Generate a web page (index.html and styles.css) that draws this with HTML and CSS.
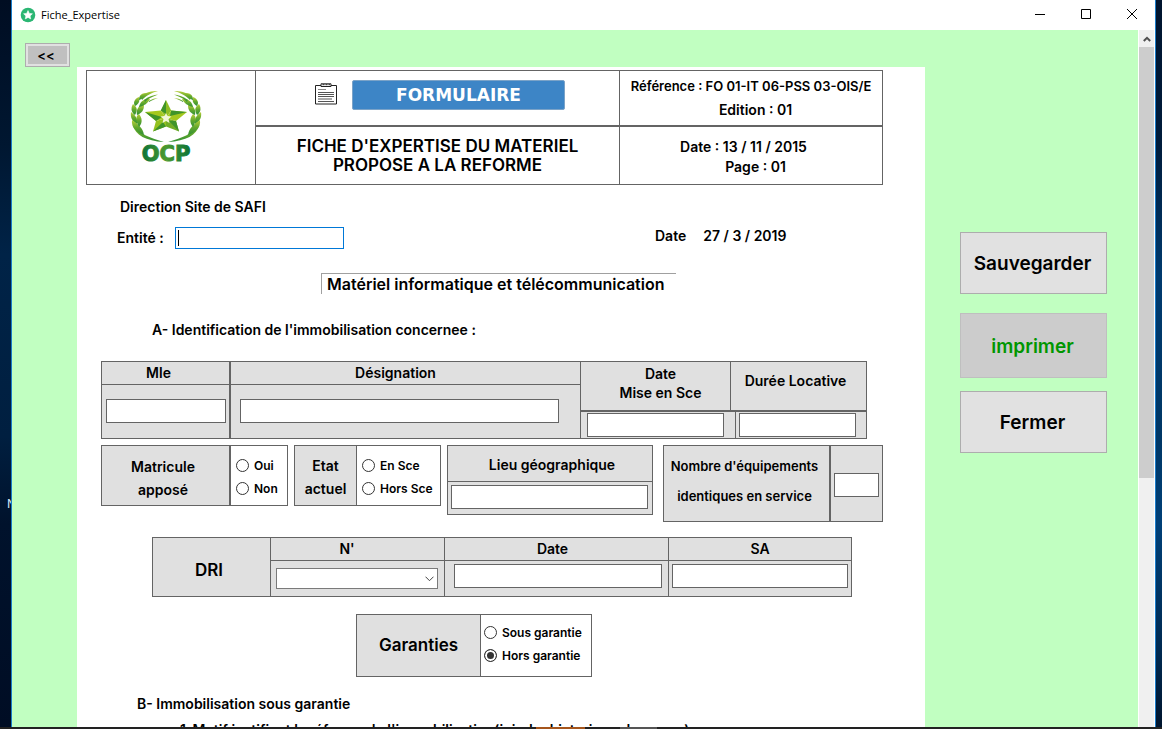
FILE: index.html
```html
<!DOCTYPE html>
<html lang="fr">
<head>
<meta charset="utf-8">
<meta name="viewport" content="width=device-width, initial-scale=1">
<title>Fiche_Expertise</title>
<link rel="stylesheet" href="styles.css">
</head>
<body>
<div class="desktop">
  <div class="wallpaper wallpaper-left"><span>N</span></div>
  <div class="window">
    <header class="titlebar">
      <svg class="app-icon" viewBox="0 0 16 16" aria-hidden="true">
        <circle cx="8" cy="8" r="7.3" fill="#2bb673"/>
        <path d="M8 3.6l1.3 2.8 3.1.4-2.3 2.1.6 3L8 10.400l-2.700 1.500.6-3-2.300-2.100 3.100-.4z" fill="#fff" stroke="#fff" stroke-width=".6" stroke-linejoin="round"/>
      </svg>
      <span class="app-title">Fiche_Expertise</span>
      <div class="window-controls">
        <button type="button" aria-label="Réduire"><svg viewBox="0 0 10 10"><path d="M0 4.500h10"/></svg></button>
        <button type="button" aria-label="Agrandir"><svg viewBox="0 0 10 10"><path d="M.5-.5h9v9h-9z"/></svg></button>
        <button type="button" aria-label="Fermer la fenêtre"><svg viewBox="0 0 10 10"><path d="M0-1l10 10M10-1L0 9"/></svg></button>
      </div>
    </header>

    <div class="client">
      <main class="workspace">
        <div class="nav"><button type="button" class="back">&lt;&lt;</button></div>

        <form class="sheet">
          <div class="head">
            <div class="head-logo">
              <svg class="logo" viewBox="0 0 72 72" role="img" aria-label="OCP">
                <defs>
                  <linearGradient id="leaf" x1="0" y1="0" x2="0" y2="1">
                    <stop offset="0" stop-color="#b9cf3a"/><stop offset=".5" stop-color="#62a82c"/><stop offset="1" stop-color="#2f8f35"/>
                  </linearGradient>
                  <linearGradient id="word" x1="0" y1="0" x2="1" y2="0">
                    <stop offset="0" stop-color="#0b7238"/><stop offset=".5" stop-color="#4c9a2f"/><stop offset="1" stop-color="#0b7238"/>
                  </linearGradient>
                  <g id="branch">
                    <path d="M3 34C5 44 16 50 34 51C21 47 9 43 3 34z"/>
                    <path d="M1 21C0 27 3 31 7 33C8 27 5 24 1 21z"/>
                    <path d="M2 29C1 37 7 42 14 44C13 37 8 33 2 29z"/>
                    <path d="M9 23C5 25 6 31 9 36C13 31 12 27 9 23z"/>
                    <path d="M3 13C0 18 2 22 5 24C8 19 7 16 3 13z"/>
                    <path d="M14 14C8 14 6 19 7 24C12 22 14 19 14 14z"/>
                    <path d="M9 6C4 8 3 12 5 15C9 13 10 10 9 6z"/>
                    <path d="M20 8C14 7 10 11 9 16C14 15 18 12 20 8z"/>
                    <path d="M16 2C11 2 9 5 9 9C13 8 15 5 16 2z"/>
                    <path d="M11 5C16 1 22 0 28 0C21 2 17 4 12 9zM14 9C19 5 24 4 28 3.500C22 6 19 7 15 11z"/>
                    <path d="M19 10C22 8 25 7 28 7C25 8 22 9 19 11z"/>
                  </g>
                </defs>
                <g fill="url(#leaf)">
                  <use href="#branch"/>
                  <use href="#branch" transform="matrix(-1 0 0 1 72 0)"/>
                </g>
                <g>
                  <path d="M36 9l5.200 10.500L36 27l-5.200-7.500z" fill="#8fbe22"/>
                  <path d="M57 21L46 30l-10-3 5.200-7.500z" fill="#a5c81e"/>
                  <path d="M49 40.500l-13-5V27l10 3z" fill="#72ae25"/>
                  <path d="M23 40.500L26 30l10-3v8.500z" fill="#94c11f"/>
                  <path d="M15 21l15.800-1.500L36 27l-10 3z" fill="#a5c81e"/>
                  <path d="M36 9v14l-5.200-3.500zM57 21L40 25l1.200-5.500zM49 40.500L39 30l7 0zM23 40.500L33 31l3 4.500zM15 21l17 5-6 4z" fill="#3f9429"/>
                  <path d="M36 22l1.500 3 4 .5-3 2.500 1 4-3.500-2-3.500 2 1-4-3-2.500 4-.5z" fill="#f2f7d5"/>
                </g>
                <text x="36" y="70" text-anchor="middle" class="logo-word">OCP</text>
              </svg>
            </div>
            <div class="head-kind">
              <svg class="clipboard" viewBox="0 0 22 22" aria-hidden="true">
                <path d="M.5 2.500h21v18.500h-21z" fill="#fff" stroke="#222"/>
                <path d="M6 .8h10v2.700H6z" fill="#fff" stroke="#222"/>
                <path d="M7.500 1.700h2M10.500 1.700h2M13.500 1.700h1.500" stroke="#222"/>
                <path d="M3 6.500h8" stroke="#888"/>
                <path d="M3 9.500h16M3 11.500h16M3 13.500h16M3 16h14M3 18.500h16" stroke="#555"/>
              </svg>
              <span class="kind-badge">FORMULAIRE</span>
            </div>
            <div class="head-ref">
              <p class="ref">Référence : FO 01-IT 06-PSS 03-OIS/E</p>
              <p>Edition : 01</p>
            </div>
            <h1 class="head-title">FICHE D'EXPERTISE DU MATERIEL<br>PROPOSE A LA REFORME</h1>
            <div class="head-date">
              <p class="issued">Date : 13 / 11 / 2015</p>
              <p>Page : 01</p>
            </div>
          </div>

          <p class="site">Direction Site de SAFI</p>
          <div class="entity">
            <label for="entite">Entité :</label>
            <span class="active-field"><input id="entite" type="text"><i class="caret"></i></span>
            <p class="today"><span>Date</span><span>27 / 3 / 2019</span></p>
          </div>

          <h2 class="subject">Matériel informatique et télécommunication</h2>
          <h3 class="section-a">A- Identification de l'immobilisation concernee :</h3>

          <div class="asset">
            <div class="asset-col asset-mle">
              <label for="mle">Mle</label>
              <div><input id="mle" type="text"></div>
            </div>
            <div class="asset-col asset-name">
              <label for="designation">Désignation</label>
              <div><input id="designation" type="text"></div>
            </div>
            <div class="asset-dates">
              <div class="dates-labels">
                <label for="mise">Date<br>Mise en Sce</label>
                <label for="duree">Durée Locative</label>
              </div>
              <div class="dates-fields">
                <div><input id="mise" type="text"></div>
                <div><input id="duree" type="text"></div>
              </div>
            </div>
          </div>

          <div class="status">
            <div class="choice tagged" role="radiogroup" aria-labelledby="matricule">
              <div class="choice-name" id="matricule">Matricule<br>apposé</div>
              <div class="choice-list">
                <label><input type="radio" name="matricule">Oui</label>
                <label><input type="radio" name="matricule">Non</label>
              </div>
            </div>
            <div class="choice state" role="radiogroup" aria-labelledby="etat">
              <div class="choice-name" id="etat">Etat<br>actuel</div>
              <div class="choice-list">
                <label><input type="radio" name="etat">En Sce</label>
                <label><input type="radio" name="etat">Hors Sce</label>
              </div>
            </div>
            <div class="place">
              <label for="lieu">Lieu géographique</label>
              <div><input id="lieu" type="text"></div>
            </div>
            <div class="count">
              <label for="nombre">Nombre d'équipements<br>identiques en service</label>
              <div><input id="nombre" type="text"></div>
            </div>
          </div>

          <div class="dri">
            <div class="dri-name">DRI</div>
            <div class="dri-col dri-number">
              <label for="numero">N'</label>
              <div><span class="picker"><select id="numero"><option></option></select><svg viewBox="0 0 9 6" aria-hidden="true"><path d="M.5.700l4 4 4-4"/></svg></span></div>
            </div>
            <div class="dri-col dri-date">
              <label for="dri-date">Date</label>
              <div><input id="dri-date" type="text"></div>
            </div>
            <div class="dri-col dri-sa">
              <label for="sa">SA</label>
              <div><input id="sa" type="text"></div>
            </div>
          </div>

          <div class="choice warranty" role="radiogroup" aria-labelledby="garanties">
            <div class="choice-name" id="garanties">Garanties</div>
            <div class="choice-list">
              <label><input type="radio" name="garantie">Sous garantie</label>
              <label><input type="radio" name="garantie" checked>Hors garantie</label>
            </div>
          </div>

          <h3 class="section-b">B- Immobilisation sous garantie</h3>
          <p class="reason">1-Motif justifiant la réforme de l'immobilisation(joindre historique de panne)</p>
        </form>

        <div class="actions">
          <button type="button">Sauvegarder</button>
          <button type="button" class="print">imprimer</button>
          <button type="button">Fermer</button>
        </div>
      </main>
      <div class="scrollbar">
        <button type="button" aria-label="Défiler vers le haut"><svg viewBox="0 0 8 6"><path d="M.8 5L4 1.800 7.200 5"/></svg></button>
        <div class="thumb"></div>
      </div>
    </div>
  </div>
  <div class="wallpaper wallpaper-right"></div>
  <div class="taskbar"><i class="task-active"></i><i class="task-idle"></i></div>
</div>
</body>
</html>
```

FILE: styles.css
```css
* { box-sizing: border-box; }

body {
  margin: 0;
  overflow: hidden;
  color: #000;
  font: 600 14px/20px Inter, "Liberation Sans", sans-serif;
}

h1, h2, h3, p { margin: 0; font: inherit; }

button, input, select { font: inherit; color: inherit; }

.desktop {
  display: grid;
  grid-template: minmax(0, 1fr) 2px / 11px minmax(0, 1fr) 6px;
  height: 100vh;
}

.wallpaper-left {
  overflow: hidden;
  padding: 494px 0 0 7px;
  background: linear-gradient(#000d22, #001731 20%, #002347 35%, #001f40 60%, #00122c 72%, #000d24);
  color: #cfe6f5;
  font-size: 12px;
  font-weight: 400;
}

.wallpaper-right {
  background: linear-gradient(#00142e, #001c3c 20%, #003a6e 38%, #003766 60%, #004078 72%, #002950 90%, #00152e);
}

.taskbar { grid-column: 1 / -1; display: flex; background: #222; }
.task-active { width: 49px; margin-left: 536px; background: #a5551c; }
.task-idle { width: 37px; margin-left: 35px; background: #555; }

/* Window frame */

.window {
  display: flex;
  flex-direction: column;
  min-height: 0;
  border: solid #1a7cc9;
  border-width: 0 1px;
  background: #fff;
}

.titlebar { display: flex; align-items: center; flex: none; height: 30px; padding-left: 8px; }
.app-icon { width: 16px; height: 16px; margin-right: 5px; }
.app-title { font: 400 11px/16px "Open Sans", sans-serif; }

.window-controls { display: flex; margin-left: auto; }
.window-controls button {
  display: grid;
  place-items: center;
  width: 46px;
  height: 30px;
  padding: 0;
  border: 0;
  background: none;
}
.window-controls svg { width: 10px; height: 10px; overflow: visible; fill: none; stroke: #000; }

.client { display: flex; flex: 1; min-height: 0; }

.workspace {
  display: grid;
  grid-template-columns: 65px minmax(0, 1fr) 213px;
  flex: 1;
  min-width: 0;
  overflow: hidden;
  background: #c1ffc1;
}

.nav { padding: 13px 7px 0 13px; }
.back {
  width: 45px;
  height: 24px;
  padding: 0 3px 0 0;
  border: 1px solid #adadad;
  background: #c0c0c0;
  box-shadow: inset 0 0 0 2px #e1e1e1;
  font-size: 13px;
  line-height: 20px;
}

.scrollbar { width: 17px; border: solid #fff; border-width: 0 1px; background: #f0f0f0; }
.scrollbar button { display: grid; place-items: center; width: 100%; height: 17px; padding: 0; border: 0; background: none; }
.scrollbar svg { width: 8px; height: 6px; fill: none; stroke: #505050; stroke-width: 2; }
.thumb { height: 431px; background: #cdcdcd; }

.actions { display: flex; flex-direction: column; padding: 202px 31px 0 35px; }
.actions button {
  height: 62px;
  margin-bottom: 19px;
  padding: 2px 2px 0 0;
  border: 1px solid #adadad;
  background: #e1e1e1;
  font-size: 19px;
}
.actions .print { height: 65px; margin-bottom: 13px; border-color: #bfbfbf; background: #ccc; color: #009600; }

/* Sheet */

.sheet { margin-top: 37px; padding-top: 3px; background: #fff; }

.sheet input[type="text"] {
  display: block;
  width: 100%;
  height: 24px;
  padding: 0 4px;
  border: 1px solid #646464;
  border-radius: 0;
  background: #fff;
  outline: 0;
}

.head {
  display: grid;
  grid-template: 56px 57px / 169fr 364fr 262fr;
  margin: 0 42px 0 9px;
  border: 1px solid #646464;
  text-align: center;
}
.head-logo { grid-row: 1 / 3; padding: 20px 10px 0 0; border-right: 1px solid #646464; }
.logo { width: 72px; height: 72px; overflow: visible; }
.logo-word { fill: url(#word); stroke: url(#word); font: 700 21px "DejaVu Sans", sans-serif; }

.head-kind {
  display: flex;
  justify-content: center;
  gap: 15px;
  padding: 9px 0 0 5px;
  border: solid #646464;
  border-width: 0 1px 2px 0;
}
.clipboard { width: 22px; height: 22px; margin-top: 3px; }
.kind-badge {
  width: 213px;
  height: 30px;
  border: 1px solid #7ba3c8;
  border-radius: 2px;
  background: #3d85c6;
  color: #fff;
  font: 700 17px/28px "DejaVu Sans", sans-serif;
}
.head-ref { padding-top: 5px; border-bottom: 2px solid #646464; }
.head-ref p { padding-left: 9px; }
.head-ref .ref { padding: 0 0 4px; font-size: 13px; white-space: nowrap; }
.head-title { padding-top: 10px; border-right: 1px solid #646464; font-size: 17px; line-height: 19px; }
.head-date { padding: 10px 0 0 9px; }
.head-date .issued { padding-right: 24px; }

.site { margin: 12px 0 0 43px; }

.entity { display: flex; margin: 10px 0 0 40px; }
.entity label { width: 58px; padding-top: 1px; }
.active-field { position: relative; width: 169px; }
.sheet .active-field input { height: 22px; border-color: #0078d7; }
.caret { position: absolute; top: 3px; left: 3px; width: 1px; height: 16px; background: #000; }
.today { display: flex; gap: 17px; margin-left: 311px; line-height: 17px; }

.subject {
  width: 355px;
  height: 21px;
  margin: 24px 0 0 244px;
  padding-left: 5px;
  border: solid #a0a0a0;
  border-width: 1px 0 0 1px;
  font-size: 16px;
  white-space: nowrap;
}
.section-a { margin: 26px 0 0 75px; }

/* Asset identification */

.asset {
  display: grid;
  grid-template-columns: 129fr 350fr 285fr;
  margin: 21px 58px 0 24px;
  border: 1px solid #646464;
  background: #e0e0e0;
  text-align: center;
}
.asset-col label { display: block; height: 23px; border-bottom: 1px solid #646464; line-height: 22px; }
.asset-mle { border-right: 2px solid #646464; }
.asset-mle label { padding-right: 14px; }
.asset-mle div { padding: 14px 3px 15px 4px; }
.asset-name { border-right: 1px solid #646464; }
.asset-name label { padding-right: 20px; }
.asset-name div { padding: 14px 21px 15px 9px; }

.asset-dates { display: grid; grid-template-rows: 50px 26px; }
.dates-labels { display: grid; grid-template-columns: 150fr 135fr; border-bottom: 2px solid #646464; line-height: 19px; }
.dates-labels label:first-child { padding: 2px 0 0 10px; border-right: 1px solid #646464; }
.dates-labels label:last-child { padding: 9px 6px 0 0; }
.dates-fields { display: grid; grid-template-columns: 155fr 130fr; }
.dates-fields div { padding: 1px 10px 1px 3px; }
.dates-fields div:first-child { padding: 1px 11px 1px 6px; border-right: 1px solid #646464; }

/* Boxes with radio buttons */

.choice { display: grid; border: 1px solid #646464; background: #fff; }
.choice-name { border-right: 1px solid #646464; background: #e0e0e0; text-align: center; }
.choice-list { display: flex; flex-direction: column; padding: 8px 0 0 5px; }
.choice-list label { display: flex; align-items: center; gap: 5px; height: 23px; font-size: 12px; white-space: nowrap; }
.choice-list input {
  flex: none;
  width: 13px;
  height: 13px;
  margin: 0;
  border: 1px solid #333;
  border-radius: 50%;
  background: #fff;
  appearance: none;
}
.choice-list input:checked { background: #333; box-shadow: inset 0 0 0 2px #fff; }

.status {
  display: grid;
  grid-template-columns: 187fr 6fr 147fr 6fr 206fr 10fr 220fr;
  align-items: start;
  margin: 6px 42px 0 24px;
}
.tagged { grid-template-columns: 129fr 56fr; }
.tagged .choice-name { padding: 9px 5px 4px 0; border-right-width: 2px; line-height: 23px; }
.state { grid-column: 3; grid-template-columns: 62fr 83fr; }
.state .choice-name { padding: 8px 5px 5px; line-height: 23px; }

.place { grid-column: 5; border: 1px solid #646464; background: #e0e0e0; text-align: center; }
.place label { display: block; height: 36px; padding: 9px 0 0 4px; border-bottom: 1px solid #646464; }
.place div { padding: 3px 4px 5px 3px; }

.count {
  display: grid;
  grid-column: 7;
  grid-template-columns: 167fr 51fr;
  border: 1px solid #646464;
  background: #e0e0e0;
}
.count label {
  padding: 5px 4px 10px 0;
  border-right: 2px solid #646464;
  font-size: 13px;
  line-height: 30px;
  text-align: center;
  white-space: nowrap;
}
.count div { padding: 27px 3px 0; }

/* DRI */

.dri {
  display: grid;
  grid-template-columns: 117fr 174fr 224fr 183fr;
  margin: 15px 73px 0 75px;
  border: 1px solid #646464;
  background: #e0e0e0;
  text-align: center;
}
.dri-name { padding: 22px 5px 0 0; font-size: 17px; }
.dri-col { border-left: 1px solid #646464; }
.dri-col label { display: block; height: 23px; border-bottom: 1px solid #646464; line-height: 22px; }
.dri-number label { padding-right: 21px; }
.dri-number div { padding: 7px 6px 0 5px; }
.dri-date label { padding-right: 8px; }
.dri-date div { padding: 3px 6px 8px 9px; }
.dri-sa div { padding: 3px 3px 8px; }

.picker { display: block; position: relative; }
.picker select {
  display: block;
  width: 100%;
  height: 21px;
  border: 1px solid #7a7a7a;
  border-radius: 0;
  background: #fff;
  appearance: none;
}
.picker svg { position: absolute; top: 8px; right: 4px; width: 9px; height: 6px; fill: none; stroke: #444; pointer-events: none; }

.warranty { grid-template-columns: 124fr 110fr; width: 236px; margin: 17px 0 0 279px; }
.warranty .choice-name { padding: 20px 0 21px; font-size: 17px; }
.warranty .choice-list { padding: 6px 0 0 3px; }

.section-b { margin: 17px 0 0 60px; }
.reason { margin: 6px 0 0 103px; white-space: nowrap; }
```
